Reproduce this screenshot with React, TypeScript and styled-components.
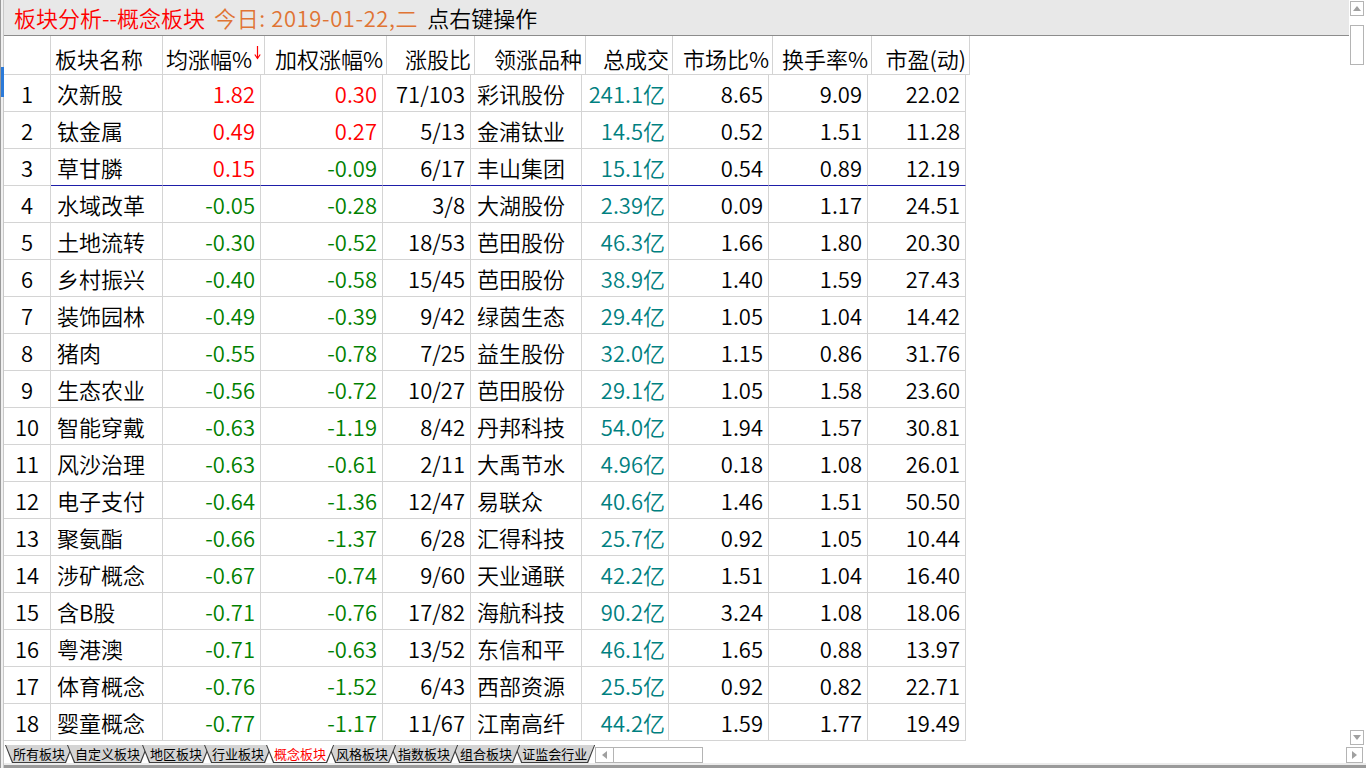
import React from 'react';
import styled, { createGlobalStyle } from 'styled-components';

const colors = {
  up: '#ff0000',
  down: '#008000',
  teal: '#008080',
  grid: '#d4d4d4',
  split: '#1e1ea8',
  bar: '#e8e8e8',
  orange: '#e07434',
  scroll: '#b4b4b4',
};

type Align = 'left' | 'right' | 'center';

type Column = { title: string; w: number; align: Align; sort?: boolean };

const columns: Column[] = [
  { title: '', w: 47, align: 'center' },
  { title: '板块名称', w: 112, align: 'left' },
  { title: '均涨幅%', w: 98, align: 'right', sort: true },
  { title: '加权涨幅%', w: 122, align: 'right' },
  { title: '涨股比', w: 88, align: 'right' },
  { title: '领涨品种', w: 111, align: 'right' },
  { title: '总成交', w: 87, align: 'right' },
  { title: '市场比%', w: 100, align: 'right' },
  { title: '换手率%', w: 99, align: 'right' },
  { title: '市盈(动)', w: 98, align: 'right' },
];

// 名称, 均涨幅, 加权涨幅, 涨股比, 领涨品种, 总成交, 市场比, 换手率, 市盈
type Sector = [string, string, string, string, string, string, string, string, string];

const sectors: Sector[] = [
  ['次新股', '1.82', '0.30', '71/103', '彩讯股份', '241.1亿', '8.65', '9.09', '22.02'],
  ['钛金属', '0.49', '0.27', '5/13', '金浦钛业', '14.5亿', '0.52', '1.51', '11.28'],
  ['草甘膦', '0.15', '-0.09', '6/17', '丰山集团', '15.1亿', '0.54', '0.89', '12.19'],
  ['水域改革', '-0.05', '-0.28', '3/8', '大湖股份', '2.39亿', '0.09', '1.17', '24.51'],
  ['土地流转', '-0.30', '-0.52', '18/53', '芭田股份', '46.3亿', '1.66', '1.80', '20.30'],
  ['乡村振兴', '-0.40', '-0.58', '15/45', '芭田股份', '38.9亿', '1.40', '1.59', '27.43'],
  ['装饰园林', '-0.49', '-0.39', '9/42', '绿茵生态', '29.4亿', '1.05', '1.04', '14.42'],
  ['猪肉', '-0.55', '-0.78', '7/25', '益生股份', '32.0亿', '1.15', '0.86', '31.76'],
  ['生态农业', '-0.56', '-0.72', '10/27', '芭田股份', '29.1亿', '1.05', '1.58', '23.60'],
  ['智能穿戴', '-0.63', '-1.19', '8/42', '丹邦科技', '54.0亿', '1.94', '1.57', '30.81'],
  ['风沙治理', '-0.63', '-0.61', '2/11', '大禹节水', '4.96亿', '0.18', '1.08', '26.01'],
  ['电子支付', '-0.64', '-1.36', '12/47', '易联众', '40.6亿', '1.46', '1.51', '50.50'],
  ['聚氨酯', '-0.66', '-1.37', '6/28', '汇得科技', '25.7亿', '0.92', '1.05', '10.44'],
  ['涉矿概念', '-0.67', '-0.74', '9/60', '天业通联', '42.2亿', '1.51', '1.04', '16.40'],
  ['含B股', '-0.71', '-0.76', '17/82', '海航科技', '90.2亿', '3.24', '1.08', '18.06'],
  ['粤港澳', '-0.71', '-0.63', '13/52', '东信和平', '46.1亿', '1.65', '0.88', '13.97'],
  ['体育概念', '-0.76', '-1.52', '6/43', '西部资源', '25.5亿', '0.92', '0.82', '22.71'],
  ['婴童概念', '-0.77', '-1.17', '11/67', '江南高纤', '44.2亿', '1.59', '1.77', '19.49'],
];

const tabs = ['所有板块', '自定义板块', '地区板块', '行业板块', '概念板块', '风格板块', '指数板块', '组合板块', '证监会行业'];
const activeTab = 4;

const signColor = (v: string) => (v.startsWith('-') ? colors.down : colors.up);

const GlobalStyle = createGlobalStyle`
  html, body {
    margin: 0;
    padding: 0;
    background: #fff;
    overflow: hidden;
  }
  body {
    font-family: "Noto Sans CJK SC", "Microsoft YaHei", sans-serif;
  }
`;

const App: React.FC = () => (
  <>
    <GlobalStyle />
    <Page>
      <LeftEdge>
        <EdgePart $h={67} />
        <EdgePart $h={30} $active />
        <EdgePart />
      </LeftEdge>
      <Body>
        <Top>
          <Main>
            <TitleBar>
              <TitleText $color={colors.up}>板块分析--概念板块</TitleText>
              <TitleText $color={colors.orange} $spread>今日: 2019-01-22,二</TitleText>
              <TitleText $color="#000">点右键操作</TitleText>
            </TitleBar>
            <Grid>
              <HeaderRow>
                {columns.map((c, i) => (
                  <HeadCell key={i} $w={c.w} $align={c.align} $pad={c.align === 'left' ? 4 : 3}>
                    {c.title}
                    {c.sort && (
                      <SortMark width="7" height="14" viewBox="0 0 7 14">
                        <path d="M3.5 0 V12 M0.8 8.5 L3.5 12.5 L6.2 8.5" stroke={colors.up} strokeWidth="1.2" fill="none" />
                      </SortMark>
                    )}
                  </HeadCell>
                ))}
              </HeaderRow>
              {sectors.map((s, i) => {
                const line = i === 2 ? colors.split : undefined;
                return (
                  <Row key={i}>
                    <Cell $w={47} $align="center" $pad={0}>{i + 1}</Cell>
                    <Cell $w={112} $align="left" $pad={6} $line={line}>{s[0]}</Cell>
                    <Cell $w={98} $align="right" $color={signColor(s[1])} $line={line}>{s[1]}</Cell>
                    <Cell $w={122} $align="right" $color={signColor(s[2])} $line={line}>{s[2]}</Cell>
                    <Cell $w={88} $align="right" $line={line}>{s[3]}</Cell>
                    <Cell $w={111} $align="left" $pad={6} $line={line}>{s[4]}</Cell>
                    <Cell $w={87} $align="right" $pad={3} $color={colors.teal} $line={line}>{s[5]}</Cell>
                    <Cell $w={100} $align="right" $line={line}>{s[6]}</Cell>
                    <Cell $w={99} $align="right" $line={line}>{s[7]}</Cell>
                    <Cell $w={98} $align="right" $line={line}>{s[8]}</Cell>
                  </Row>
                );
              })}
            </Grid>
          </Main>
          <VScroll>
            <ScrollButton>
              <svg width="8" height="5" viewBox="0 0 8 5">
                <path d="M0 5 L4 0 L8 5 Z" fill="#a0a0a0" />
              </svg>
            </ScrollButton>
            <Thumb />
            <Spacer />
            <ScrollButton>
              <svg width="8" height="5" viewBox="0 0 8 5">
                <path d="M0 0 L4 5 L8 0 Z" fill="#a0a0a0" />
              </svg>
            </ScrollButton>
          </VScroll>
        </Top>
        <Bottom>
          <TabRow>
            <TabStrip>
              {tabs.map((t, i) => (
                <Tab key={t} $z={i === activeTab ? 20 : i < activeTab ? i : 10 - i}>
                  <TabFace $active={i === activeTab}>{t}</TabFace>
                </Tab>
              ))}
            </TabStrip>
            <HScroll>
              <HScrollButton>
                <svg width="5" height="8" viewBox="0 0 5 8">
                  <path d="M5 0 L0 4 L5 8 Z" fill="#a0a0a0" />
                </svg>
              </HScrollButton>
            </HScroll>
            <Spacer />
            <CornerButton>
              <svg width="5" height="8" viewBox="0 0 5 8">
                <path d="M0 0 L5 4 L0 8 Z" fill="#a0a0a0" />
              </svg>
            </CornerButton>
          </TabRow>
          <BottomLight />
          <BottomBar />
        </Bottom>
      </Body>
    </Page>
  </>
);

const Page = styled.div`
  display: flex;
  width: 1366px;
  height: 768px;
  overflow: hidden;
  background: #fff;
`;

const LeftEdge = styled.div`
  display: flex;
  flex-direction: column;
  flex: 0 0 4px;
`;

const EdgePart = styled.div<{ $h?: number; $active?: boolean }>`
  flex: ${(p) => (p.$h ? `0 0 ${p.$h}px` : '1')};
  box-sizing: border-box;
  border-left: 1px solid #9a9a9a;
  border-right: 1px solid ${(p) => (p.$active ? '#2b7ad9' : '#c8c8c8')};
  background: ${(p) => (p.$active ? '#2b7ad9' : '#f0f0f0')};
`;

const Body = styled.div`
  flex: 1;
  display: flex;
  flex-direction: column;
  min-width: 0;
`;

const Top = styled.div`
  display: flex;
  height: 745px;
`;

const Main = styled.div`
  flex: 1;
  display: flex;
  flex-direction: column;
  min-width: 0;
`;

const TitleBar = styled.div`
  display: flex;
  align-items: center;
  gap: 9px;
  box-sizing: border-box;
  height: 36px;
  padding: 0 0 1px 10px;
  background: ${colors.bar};
  border-bottom: 1px solid #8c8c8c;
`;

const TitleText = styled.span<{ $color: string; $spread?: boolean }>`
  color: ${(p) => p.$color};
  font-size: 22px;
  font-weight: 350;
  line-height: 34px;
  letter-spacing: ${(p) => (p.$spread ? '0.6px' : '0')};
  white-space: nowrap;
`;

const Grid = styled.div`
  display: flex;
  flex-direction: column;
  width: 962px;
  font-size: 22px;
  font-weight: 350;
  color: #000;
`;

const HeaderRow = styled.div`
  display: flex;
  height: 39px;
`;

const Row = styled.div`
  display: flex;
  height: 37px;
`;

const Cell = styled.div<{ $w: number; $align: Align; $pad?: number; $color?: string; $line?: string }>`
  flex: 0 0 ${(p) => p.$w}px;
  box-sizing: border-box;
  height: 100%;
  display: flex;
  align-items: center;
  justify-content: ${(p) => (p.$align === 'left' ? 'flex-start' : p.$align === 'right' ? 'flex-end' : 'center')};
  padding: 0 ${(p) => p.$pad ?? 5}px;
  border-right: 1px solid ${colors.grid};
  border-bottom: 1px solid ${(p) => p.$line ?? colors.grid};
  color: ${(p) => p.$color ?? '#000'};
  line-height: 1;
  white-space: nowrap;
`;

const HeadCell = styled(Cell)`
  padding-top: 6px;
`;

const SortMark = styled.svg`
  align-self: flex-start;
  margin: 4px 0 0 2px;
`;

const VScroll = styled.div`
  flex: 0 0 17px;
  display: flex;
  flex-direction: column;
  align-items: flex-start;
  padding: 1px 0 0 1px;
  box-sizing: border-box;
`;

const ScrollButton = styled.div`
  display: flex;
  align-items: center;
  justify-content: center;
  box-sizing: border-box;
  width: 14px;
  height: 15px;
  border: 1px solid ${colors.scroll};
  background: #fff;
`;

const Thumb = styled.div`
  box-sizing: border-box;
  width: 14px;
  height: 40px;
  margin-top: 9px;
  border: 1px solid ${colors.scroll};
  background: #fff;
`;

const Spacer = styled.div`
  flex: 1;
`;

const Bottom = styled.div`
  display: flex;
  flex-direction: column;
  height: 23px;
`;

const TabRow = styled.div`
  display: flex;
  align-items: flex-start;
  height: 18px;
`;

const TabStrip = styled.div`
  display: flex;
  padding-left: 1px;
`;

const trapezoid = 'polygon(0 0, 100% 0, calc(100% - 7px) 100%, 7px 100%)';

const Tab = styled.div<{ $z: number }>`
  position: relative;
  z-index: ${(p) => p.$z};
  display: flex;
  box-sizing: border-box;
  height: 18px;
  padding: 0 1px 1px;
  margin-right: -6px;
  background: #3c3c3c;
  clip-path: ${trapezoid};
`;

const TabFace = styled.div<{ $active: boolean }>`
  display: flex;
  align-items: center;
  padding: 0 7px;
  background: ${(p) => (p.$active ? '#fff' : '#d4d4d4')};
  color: ${(p) => (p.$active ? colors.up : '#000')};
  font-size: 13px;
  line-height: 17px;
  white-space: nowrap;
  clip-path: ${trapezoid};
`;

const HScroll = styled.div`
  display: flex;
  box-sizing: border-box;
  width: 108px;
  height: 16px;
  margin: 2px 0 0 6px;
  border: 1px solid ${colors.scroll};
  background: #fff;
`;

const HScrollButton = styled.div`
  display: flex;
  align-items: center;
  justify-content: center;
  width: 17px;
  border-right: 1px solid ${colors.scroll};
`;

const CornerButton = styled.div`
  display: flex;
  align-items: center;
  justify-content: center;
  box-sizing: border-box;
  width: 17px;
  height: 16px;
  margin: 2px 3px 0 0;
  border: 1px solid ${colors.scroll};
`;

const BottomLight = styled.div`
  height: 2px;
  background: #ececec;
`;

const BottomBar = styled.div`
  height: 3px;
  background: #9a9a9a;
`;

export default App;
